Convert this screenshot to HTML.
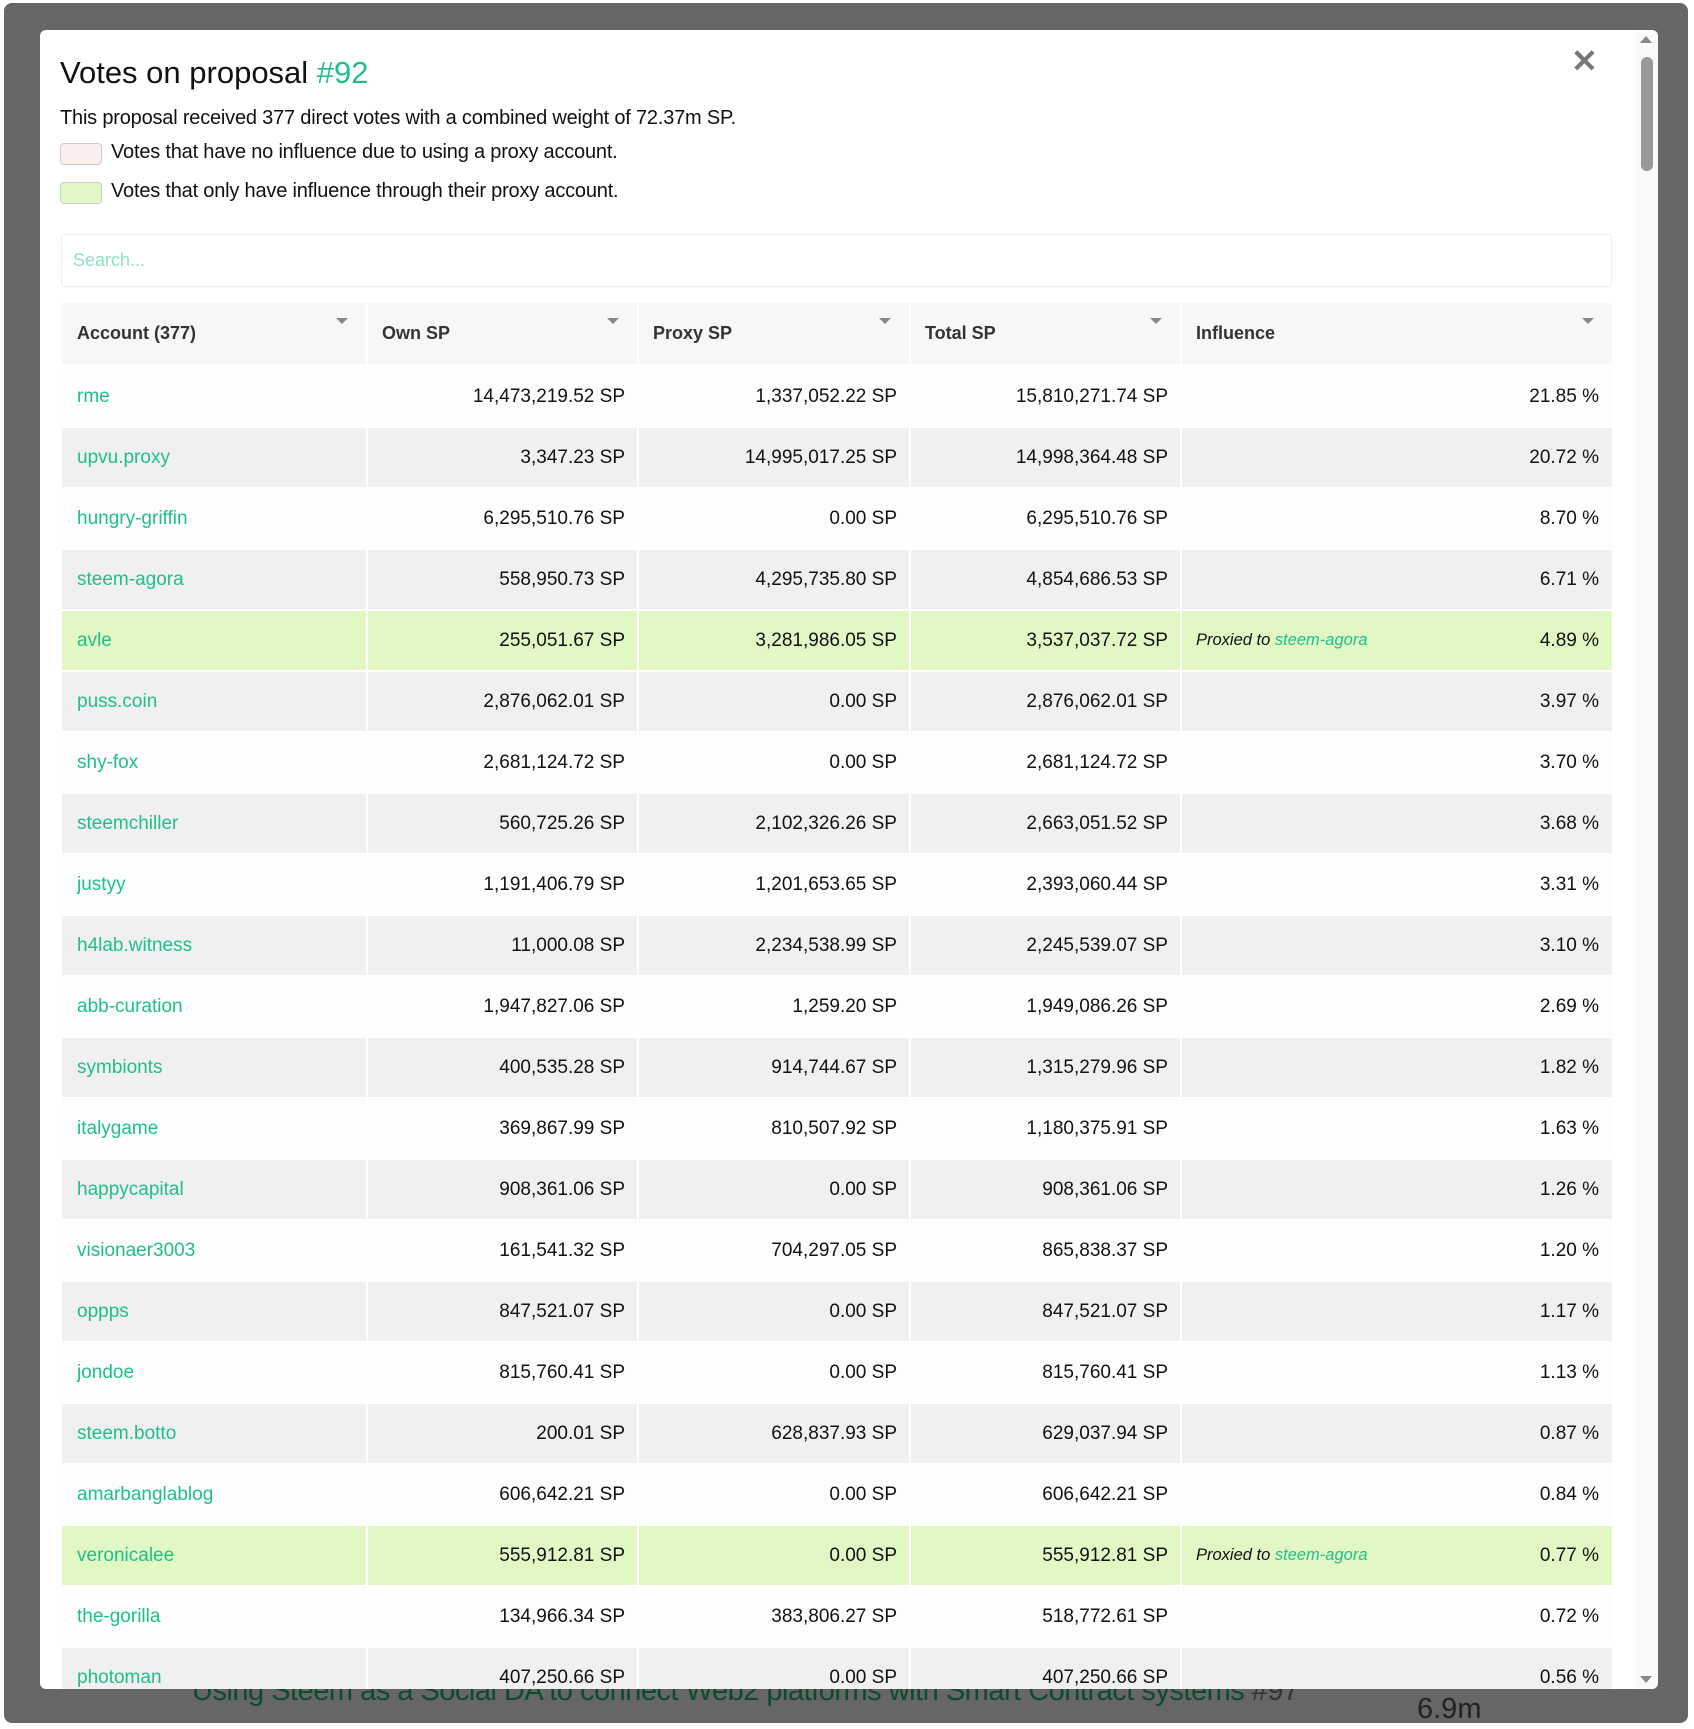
<!DOCTYPE html>
<html><head><meta charset="utf-8"><style>
*{box-sizing:border-box;margin:0;padding:0}
html,body{width:1694px;height:1729px;overflow:hidden;background:#fff;font-family:"Liberation Sans",sans-serif}
.frame{position:absolute;left:4px;top:3px;width:1684px;height:1720px;background:#666;border-radius:8px;overflow:hidden}
.bgtxt{position:absolute;left:188px;top:1672px;font-size:29px;color:#0d4a30;white-space:nowrap;letter-spacing:-0.5px}
.bgnum{position:absolute;left:1413px;top:1690px;font-size:29px;color:#222}
.modal{position:absolute;left:40px;top:30px;width:1618px;height:1659px;background:#fff;border-radius:6px;overflow:hidden}
.title{position:absolute;left:20px;top:25px;font-size:31px;color:#111}
.g{color:#1fbf8c}
.desc{position:absolute;left:20px;top:77px;font-size:20px;color:#111;white-space:nowrap;letter-spacing:-0.2px}
.leg{position:absolute;left:20px;width:42px;height:22px;border:1px solid #ccc;border-radius:4px}
.legt{position:absolute;left:71px;font-size:20px;color:#111;white-space:nowrap;letter-spacing:-0.2px}
.search{position:absolute;left:21px;top:204px;width:1551px;height:53px;border:1px solid #eee;border-radius:3px;font-size:18px;color:#8fe0c4;padding:15px 0 0 11px}
.row{position:absolute;left:22px;width:1550px;height:59px}
.c{position:absolute;top:0;height:100%;font-size:19px;color:#111;display:flex;align-items:center;white-space:nowrap}
.c1{left:0;width:304px;padding-left:15px}
.c2{left:306px;width:269px;justify-content:flex-end;padding-right:12px}
.c3{left:577px;width:270px;justify-content:flex-end;padding-right:12px}
.c4{left:849px;width:269px;justify-content:flex-end;padding-right:12px}
.c5{left:1120px;width:430px;justify-content:flex-end;padding-right:13px}
.hd .c{background:#f7f7f7;color:#333;font-weight:bold;font-size:18px;justify-content:flex-start;padding-left:14px}
.hd .c1{padding-left:15px}
.arr{position:absolute;top:15px;right:18px;width:0;height:0;border-left:6px solid transparent;border-right:6px solid transparent;border-top:6px solid #888}
.w .c{background:#fdfdfd}.s .c{background:#f0f0f0}.gr .c{background:#e2f8c4}
.c1 a{color:#1fbf8c;text-decoration:none}
.px{position:absolute;left:14px;font-style:italic;font-size:16.5px}
.sb{position:absolute;left:1595px;top:0;width:23px;height:1659px;background:#fafafa}
.thumb{position:absolute;left:6px;top:27px;width:12px;height:114px;background:#999;border-radius:6px}
.close{position:absolute;left:1531px;top:12px;font-size:32px;color:#777;font-weight:bold}
</style></head><body>
<div class="frame">
<div class="bgtxt">Using Steem as a Social DA to connect Web2 platforms with Smart Contract systems <span style="color:#333">#97</span></div>
<div class="bgnum">6.9m</div>
</div>
<div class="modal">
<div class="title">Votes on proposal <span class="g">#92</span></div>
<div class="desc">This proposal received 377 direct votes with a combined weight of 72.37m SP.</div>
<div class="leg" style="top:113px;background:#fdeeee"></div><div class="legt" style="top:111px">Votes that have no influence due to using a proxy account.</div>
<div class="leg" style="top:152px;background:#e2f8c4"></div><div class="legt" style="top:150px">Votes that only have influence through their proxy account.</div>
<div class="search">Search...</div>
<div class="row hd" style="top:273px;height:61px">
<div class="c c1">Account (377)<span class="arr"></span></div>
<div class="c c2">Own SP<span class="arr"></span></div>
<div class="c c3">Proxy SP<span class="arr"></span></div>
<div class="c c4">Total SP<span class="arr"></span></div>
<div class="c c5">Influence<span class="arr"></span></div>
</div>
<div id="rows"></div>
<div class="sb"><div style="position:absolute;left:5px;top:6px;border-left:6px solid transparent;border-right:6px solid transparent;border-bottom:7px solid #888"></div><div class="thumb"></div><div style="position:absolute;left:5px;top:1646px;border-left:6px solid transparent;border-right:6px solid transparent;border-top:7px solid #888"></div></div>
<div class="close">✕</div>
</div>
<script>
var d=[["rme","14,473,219.52","1,337,052.22","15,810,271.74","21.85"],
["upvu.proxy","3,347.23","14,995,017.25","14,998,364.48","20.72"],
["hungry-griffin","6,295,510.76","0.00","6,295,510.76","8.70"],
["steem-agora","558,950.73","4,295,735.80","4,854,686.53","6.71"],
["avle","255,051.67","3,281,986.05","3,537,037.72","4.89",1],
["puss.coin","2,876,062.01","0.00","2,876,062.01","3.97"],
["shy-fox","2,681,124.72","0.00","2,681,124.72","3.70"],
["steemchiller","560,725.26","2,102,326.26","2,663,051.52","3.68"],
["justyy","1,191,406.79","1,201,653.65","2,393,060.44","3.31"],
["h4lab.witness","11,000.08","2,234,538.99","2,245,539.07","3.10"],
["abb-curation","1,947,827.06","1,259.20","1,949,086.26","2.69"],
["symbionts","400,535.28","914,744.67","1,315,279.96","1.82"],
["italygame","369,867.99","810,507.92","1,180,375.91","1.63"],
["happycapital","908,361.06","0.00","908,361.06","1.26"],
["visionaer3003","161,541.32","704,297.05","865,838.37","1.20"],
["oppps","847,521.07","0.00","847,521.07","1.17"],
["jondoe","815,760.41","0.00","815,760.41","1.13"],
["steem.botto","200.01","628,837.93","629,037.94","0.87"],
["amarbanglablog","606,642.21","0.00","606,642.21","0.84"],
["veronicalee","555,912.81","0.00","555,912.81","0.77",1],
["the-gorilla","134,966.34","383,806.27","518,772.61","0.72"],
["photoman","407,250.66","0.00","407,250.66","0.56"]];
var h="";
d.forEach(function(r,i){var cls=r[5]?"gr":(i%2?"s":"w");
h+='<div class="row '+cls+'" style="top:'+(337+i*61)+'px"><div class="c c1"><a>'+r[0]+'</a></div><div class="c c2">'+r[1]+' SP</div><div class="c c3">'+r[2]+' SP</div><div class="c c4">'+r[3]+' SP</div><div class="c c5">'+(r[5]?'<span class="px">Proxied to <span class="g">steem-agora</span></span>':'')+r[4]+' %</div></div>';});
document.getElementById("rows").innerHTML=h;
</script>
</body></html>
